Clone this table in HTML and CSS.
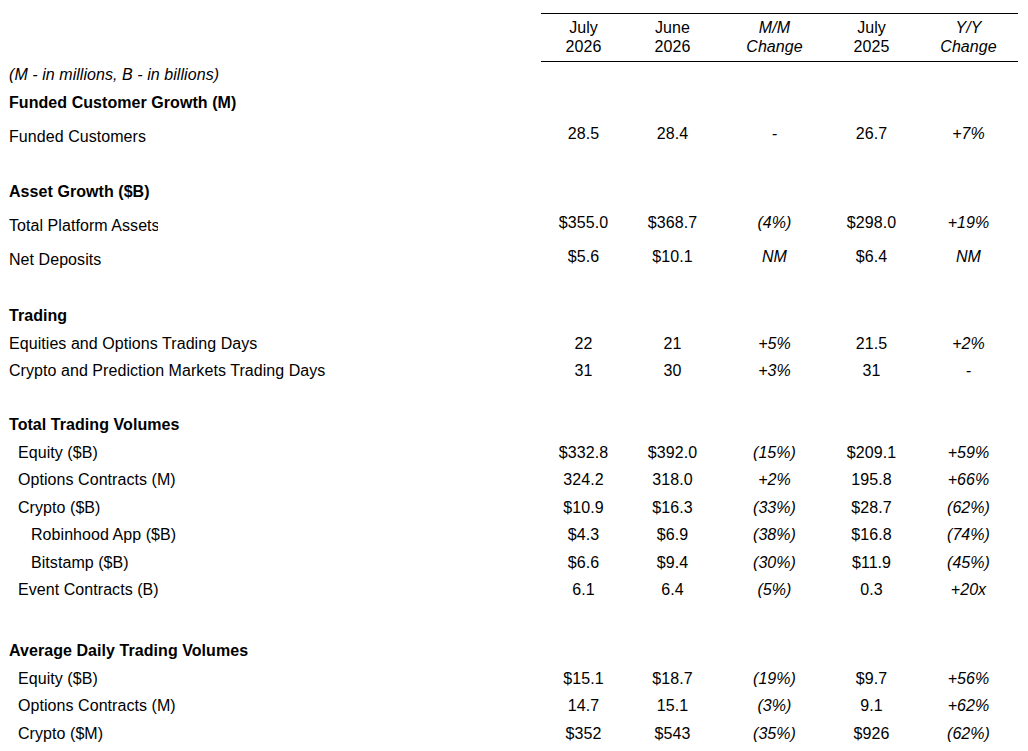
FILE: index.html
```html
<!DOCTYPE html>
<html lang="en">
<head>
<meta charset="utf-8">
<title>Operating Data</title>
<link rel="stylesheet" href="styles.css">
</head>
<body>
<div class="sheet">
  <div class="row head-row">
    <div class="label"></div>
    <div class="hcell">July<br>2026</div>
    <div class="hcell">June<br>2026</div>
    <div class="hcell chg">M/M<br>Change</div>
    <div class="hcell">July<br>2025</div>
    <div class="hcell chg">Y/Y<br>Change</div>
  </div>
  <div class="note">(M - in millions, B - in billions)</div>

  <section class="sec loose gap-24">
    <div class="row heading"><div class="label">Funded Customer Growth (M)</div></div>
    <div class="row"><div class="label">Funded Customers</div><div>28.5</div><div>28.4</div><div class="chg">-</div><div>26.7</div><div class="chg">+7%</div></div>
  </section>

  <section class="sec loose gap-25">
    <div class="row heading"><div class="label">Asset Growth ($B)</div></div>
    <div class="row"><div class="label"><span class="clip">Total Platform Assets</span></div><div>$355.0</div><div>$368.7</div><div class="chg">(4%)</div><div>$298.0</div><div class="chg">+19%</div></div>
    <div class="row"><div class="label">Net Deposits</div><div>$5.6</div><div>$10.1</div><div class="chg">NM</div><div>$6.4</div><div class="chg">NM</div></div>
  </section>

  <section class="sec gap-265">
    <div class="row heading"><div class="label">Trading</div></div>
    <div class="row"><div class="label">Equities and Options Trading Days</div><div>22</div><div>21</div><div class="chg">+5%</div><div>21.5</div><div class="chg">+2%</div></div>
    <div class="row"><div class="label">Crypto and Prediction Markets Trading Days</div><div>31</div><div>30</div><div class="chg">+3%</div><div>31</div><div class="chg">-</div></div>
  </section>

  <section class="sec gap-335">
    <div class="row heading"><div class="label">Total Trading Volumes</div></div>
    <div class="row"><div class="label l1">Equity ($B)</div><div>$332.8</div><div>$392.0</div><div class="chg">(15%)</div><div>$209.1</div><div class="chg">+59%</div></div>
    <div class="row"><div class="label l1">Options Contracts (M)</div><div>324.2</div><div>318.0</div><div class="chg">+2%</div><div>195.8</div><div class="chg">+66%</div></div>
    <div class="row"><div class="label l1">Crypto ($B)</div><div>$10.9</div><div>$16.3</div><div class="chg">(33%)</div><div>$28.7</div><div class="chg">(62%)</div></div>
    <div class="row"><div class="label l2">Robinhood App ($B)</div><div>$4.3</div><div>$6.9</div><div class="chg">(38%)</div><div>$16.8</div><div class="chg">(74%)</div></div>
    <div class="row"><div class="label l2">Bitstamp ($B)</div><div>$6.6</div><div>$9.4</div><div class="chg">(30%)</div><div>$11.9</div><div class="chg">(45%)</div></div>
    <div class="row"><div class="label l1">Event Contracts (B)</div><div>6.1</div><div>6.4</div><div class="chg">(5%)</div><div>0.3</div><div class="chg">+20x</div></div>
  </section>

  <section class="sec">
    <div class="row heading"><div class="label">Average Daily Trading Volumes</div></div>
    <div class="row"><div class="label l1">Equity ($B)</div><div>$15.1</div><div>$18.7</div><div class="chg">(19%)</div><div>$9.7</div><div class="chg">+56%</div></div>
    <div class="row"><div class="label l1">Options Contracts (M)</div><div>14.7</div><div>15.1</div><div class="chg">(3%)</div><div>9.1</div><div class="chg">+62%</div></div>
    <div class="row"><div class="label l1">Crypto ($M)</div><div>$352</div><div>$543</div><div class="chg">(35%)</div><div>$926</div><div class="chg">(62%)</div></div>
  </section>
</div>
</body>
</html>
```

FILE: styles.css
```css
html, body {
  margin: 0;
  padding: 0;
  background: #ffffff;
}

body {
  font-family: "Liberation Sans", Arial, sans-serif;
  font-size: 16px;
  line-height: 18.4px;
  letter-spacing: 0.06px;
  color: #000000;
}

.sheet {
  padding: 13px 0 0 9px;
}

.row {
  display: grid;
  grid-template-columns: 532px 85px 93px 111px 83px 105px;
  height: 27.5px;
}

.row > div {
  text-align: center;
  white-space: nowrap;
}

.row > div:nth-child(6) {
  padding-left: 6px;
}

.row > .label {
  text-align: left;
}

.label.l1 {
  padding-left: 9px;
}

.label.l2 {
  padding-left: 22px;
}

.heading .label {
  font-weight: bold;
}

.chg {
  font-style: italic;
}

.head-row {
  height: auto;
}

.hcell {
  border-top: 1px solid #000000;
  border-bottom: 1px solid #000000;
  padding: 5px 0 5px;
  line-height: 18.5px;
}

.note {
  margin-top: 4.2px;
  height: 28px;
  font-style: italic;
}

.loose .row {
  height: 34px;
}

.loose .row.heading {
  height: 31px;
}

.loose .row .label {
  padding-top: 3px;
}

.loose .row.heading .label {
  padding-top: 0;
}

.clip {
  display: inline-block;
  width: 148.5px;
  overflow: hidden;
  vertical-align: top;
}

.gap-24 { margin-bottom: 24px; }
.gap-25 { margin-bottom: 25px; }
.gap-265 { margin-bottom: 26.5px; }
.gap-335 { margin-bottom: 33.5px; }
```
